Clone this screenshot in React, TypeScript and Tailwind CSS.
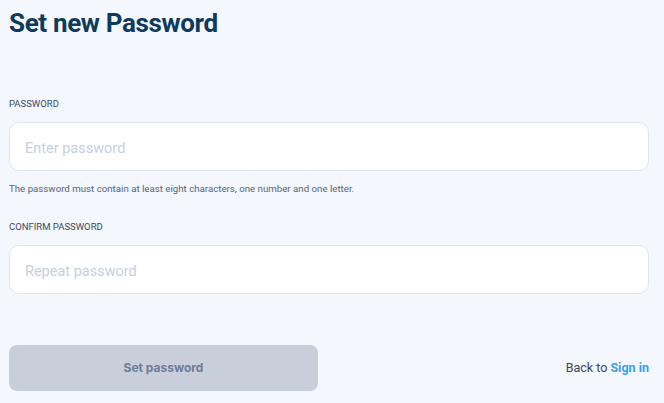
export default function App() {
  return (
    <div
      className="min-h-[403px] w-[664px] bg-[#f4f7fd] pl-[9px] pr-[15px] pt-[6px]"
      style={{ fontFamily: "Roboto, 'Liberation Sans', sans-serif" }}
    >
      <h1 className="text-[26px] font-bold leading-[35px] tracking-[-0.35px] text-[#0e3a5b]">
        Set new Password
      </h1>

      <form className="mt-[57px]" onSubmit={(e) => e.preventDefault()}>
        <label className="block text-[9.5px] uppercase leading-[12px] text-[#3b4a5e]">Password</label>
        <input
          type="password"
          placeholder="Enter password"
          className="mt-[12px] h-[49px] w-full rounded-[10px] border border-[#e0e6f0] bg-white px-[15px] pt-[4px] text-[14.5px] outline-none placeholder:text-[#c6cfdc]"
        />
        <p className="mt-[12px] text-[9.7px] leading-[12px] text-[#56657a]">
          The password must contain at least eight characters, one number and one letter.
        </p>

        <label className="mt-[26px] block text-[9.5px] uppercase leading-[12px] text-[#3b4a5e]">Confirm password</label>
        <input
          type="password"
          placeholder="Repeat password"
          className="mt-[12px] h-[49px] w-full rounded-[10px] border border-[#e0e6f0] bg-white px-[15px] pt-[4px] text-[14.5px] outline-none placeholder:text-[#c6cfdc]"
        />

        <div className="mt-[51px] flex items-center justify-between">
          <button
            type="submit"
            disabled
            className="h-[46px] w-[309px] rounded-[8px] bg-[#c9cedb] text-[12px] font-bold text-[#6c7c99]"
            style={{ fontFamily: "Inter, Roboto, sans-serif" }}
          >
            Set password
          </button>
          <p className="text-[12.5px] text-[#3a4656]">
            Back to <a href="#" className="font-bold text-[#3aa0ee]">Sign in</a>
          </p>
        </div>
      </form>
    </div>
  );
}
